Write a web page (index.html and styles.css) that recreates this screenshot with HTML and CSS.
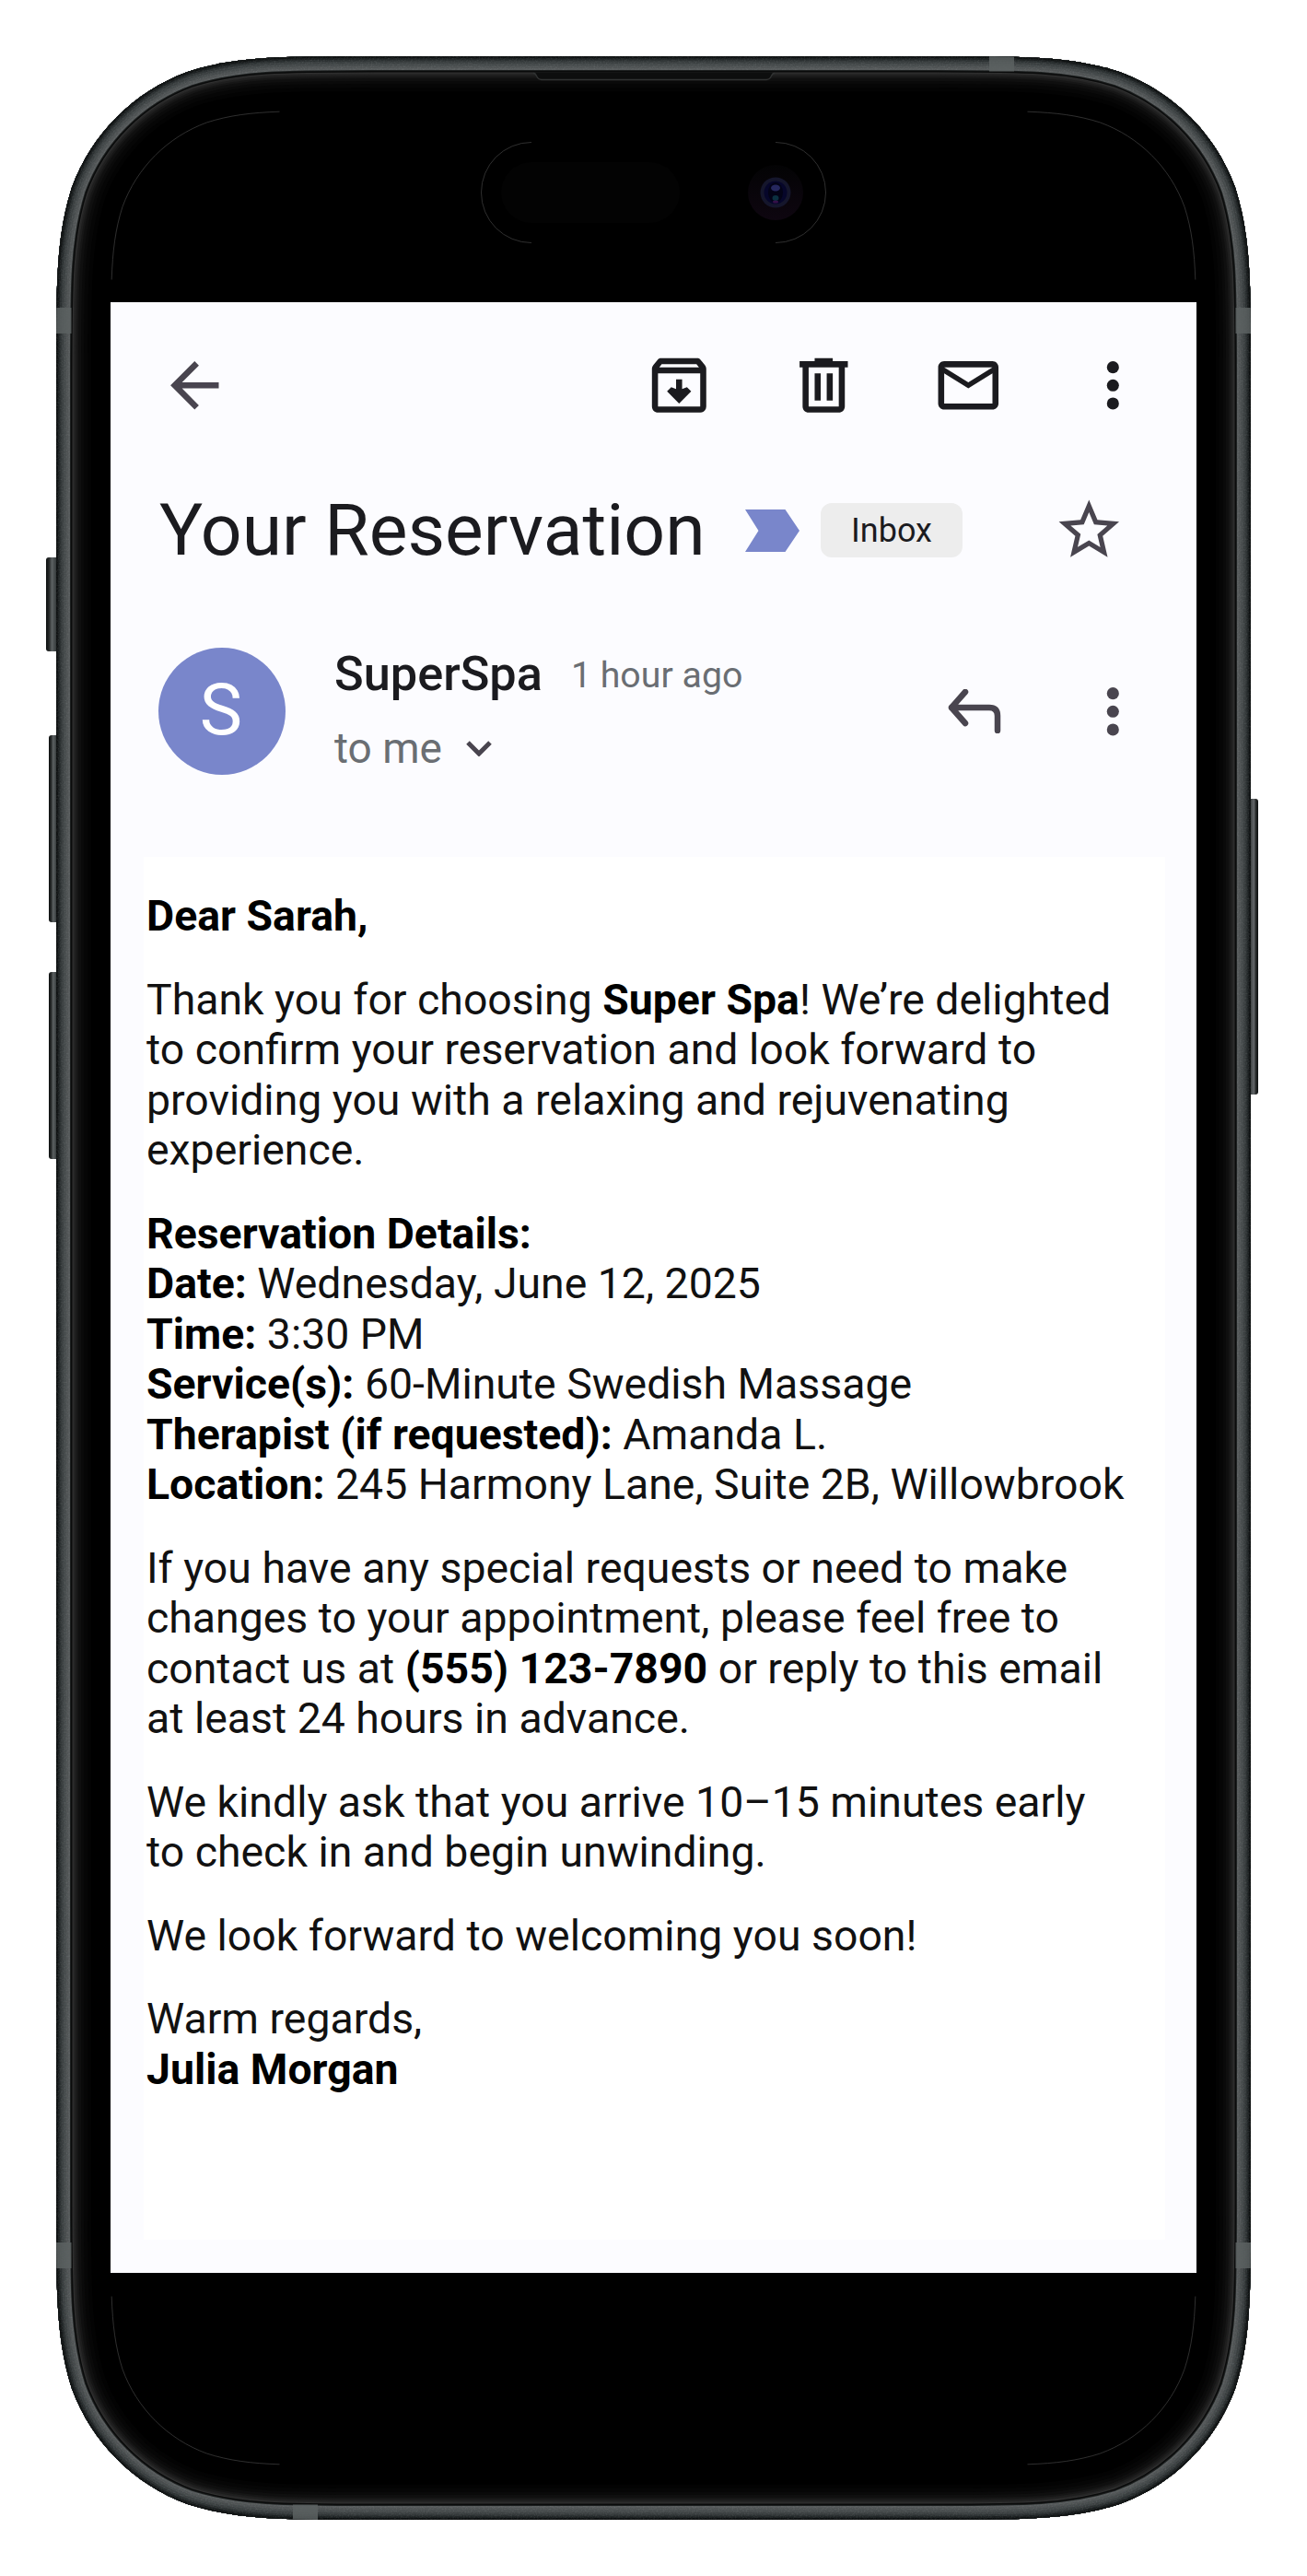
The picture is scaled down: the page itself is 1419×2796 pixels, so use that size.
FILE: index.html
```html
<!DOCTYPE html>
<html lang="en">
<head>
<meta charset="utf-8">
<title>Your Reservation</title>
<link rel="stylesheet" href="styles.css">
</head>
<body>
<main class="device">
  <svg class="frame" viewBox="0 0 1419 2796" aria-hidden="true">
    <defs>
      <path id="shell" d="M406.5 61H1012.5C1112 61 1161.7 61 1215.3 77.9C1273.7 99.2 1319.8 145.3 1341.1 203.7C1358 257.3 1358 307 1358 406.5V2389.5C1358 2489 1358 2538.7 1341.1 2592.3C1319.8 2650.7 1273.7 2696.8 1215.3 2718.1C1161.7 2735 1112 2735 1012.5 2735H406.5C307 2735 257.3 2735 203.7 2718.1C145.3 2696.8 99.2 2650.7 77.9 2592.3C61 2538.7 61 2489 61 2389.5V406.5C61 307 61 257.3 77.9 203.7C99.2 145.3 145.3 99.2 203.7 77.9C257.3 61 307 61 406.5 61Z"/>
      <clipPath id="shell-clip"><use href="#shell"/></clipPath>
      <path id="corner" pathLength="100" d="M0 252.2C0 179.6 0 143.3 12.4 104.2C27.9 61.5 61.5 27.9 104.2 12.4C143.3 0 179.6 0 252.2 0"/>
      <linearGradient id="key-left" x1="0" x2="1" y1="0" y2="0">
        <stop offset="0" stop-color="#0c0f0f"/><stop offset=".2" stop-color="#252828"/><stop offset=".4" stop-color="#5c6162"/><stop offset=".65" stop-color="#3b4041"/><stop offset="1" stop-color="#1b1f1f"/>
      </linearGradient>
      <linearGradient id="key-right" x1="1" x2="0" y1="0" y2="0">
        <stop offset="0" stop-color="#0c0f0f"/><stop offset=".2" stop-color="#252828"/><stop offset=".4" stop-color="#64686a"/><stop offset=".65" stop-color="#424647"/><stop offset="1" stop-color="#1b1f1f"/>
      </linearGradient>
      <linearGradient id="lens" x1="0" x2="0" y1="0" y2="1">
        <stop offset="0" stop-color="#030304"/><stop offset="1" stop-color="#0e0610"/>
      </linearGradient>
      <filter id="grain" x="0" y="0" width="100%" height="100%">
        <feTurbulence type="fractalNoise" baseFrequency=".6" numOctaves="2" result="n"/>
        <feColorMatrix in="n" type="matrix" values="0 0 0 0 .75  0 0 0 0 .78  0 0 0 0 .78  .9 0 0 0 -.38"/>
        <feComposite in2="SourceGraphic" operator="in"/>
      </filter>
    </defs>

    <rect x="50" y="605" width="16" height="102" rx="3" fill="url(#key-left)"/>
    <rect x="53" y="798" width="12" height="203" rx="3" fill="url(#key-left)"/>
    <rect x="53" y="1055" width="12" height="203" rx="3" fill="url(#key-left)"/>
    <rect x="1354" y="867" width="12" height="321" rx="3" fill="url(#key-right)"/>

    <use href="#shell" fill="#000"/>
    <g clip-path="url(#shell-clip)" fill="none">
      <use href="#shell" stroke="#030303" stroke-width="76"/>
      <use href="#shell" stroke="#060606" stroke-width="68"/>
      <use href="#shell" stroke="#0a0a0a" stroke-width="60"/>
      <use href="#shell" stroke="#0f0f0f" stroke-width="54"/>
      <use href="#shell" stroke="#161616" stroke-width="48"/>
      <use href="#shell" stroke="#1e1e1e" stroke-width="44"/>
      <use href="#shell" stroke="#262626" stroke-width="40"/>
      <use href="#shell" stroke="#303030" stroke-width="37"/>
      <use href="#shell" stroke="#0a0b0b" stroke-width="35"/>
      <use href="#shell" stroke="#1d2020" stroke-width="32"/>
      <use href="#shell" stroke="#565a5b" stroke-width="30"/>
      <use href="#shell" stroke="#4f5354" stroke-width="26"/>
      <use href="#shell" stroke="#454a4b" stroke-width="21"/>
      <use href="#shell" stroke="#3a3f40" stroke-width="16"/>
      <use href="#shell" stroke="#2b3031" stroke-width="11"/>
      <use href="#shell" stroke="#1b1f20" stroke-width="7"/>
      <use href="#shell" stroke="#0f1212" stroke-width="3.5"/>
      <use class="grain" href="#shell" stroke="#fff" stroke-width="30" filter="url(#grain)"/>
      <g class="antenna">
        <rect x="61" y="334" width="16.5" height="28"/>
        <rect x="1341.500" y="334" width="16.5" height="28"/>
        <rect x="61" y="2434" width="16.5" height="28"/>
        <rect x="1341.500" y="2434" width="16.5" height="28"/>
        <rect x="1074" y="61" width="27" height="16.5"/>
        <rect x="318" y="2718.500" width="27" height="16.5"/>
      </g>
    </g>
    <path d="M579 78.500C584 78.500 581 86.500 588 86.500H832C839 86.500 836 78.500 841 78.500Z" fill="#0d0e0e"/>
    <path d="M579 79.500C584 79.500 581 86.500 588 86.500H832C839 86.500 836 79.500 841 79.500" fill="none" stroke="#303232" stroke-width="1.300"/>

    <g class="hairline">
      <use href="#corner" transform="translate(120.500 120.500)"/>
      <use href="#corner" transform="translate(1298.500 120.500) scale(-1 1)"/>
      <use href="#corner" transform="translate(120.500 2675.500) scale(1 -1)"/>
      <use href="#corner" transform="translate(1298.500 2675.500) scale(-1 -1)"/>
      <path d="M577 154.500a54.500 54.500 0 0 0 0 109"/>
      <path d="M842 154.500a54.500 54.500 0 0 1 0 109"/>
    </g>
    <rect x="544" y="176" width="194" height="66" rx="33" fill="#030303"/>
    <circle cx="842" cy="209" r="30" fill="url(#lens)"/>
    <circle cx="842" cy="209" r="16.500" fill="#15162c"/>
    <circle cx="842" cy="209" r="12.500" fill="#06062a"/>
    <ellipse cx="842" cy="209" rx="8" ry="11" fill="#030316"/>
    <ellipse cx="842" cy="204" rx="5" ry="3.500" fill="#25275e"/>
    <ellipse cx="842" cy="215" rx="3.500" ry="3" fill="#0b3040"/>
    <ellipse cx="842" cy="219" rx="3" ry="1.500" fill="#351048"/>
  </svg>

  <section class="screen">
    <nav class="toolbar">
      <svg class="icon muted" viewBox="0 0 24 24"><path d="M20 11H7.830l5.590-5.590L12 4l-8 8 8 8 1.410-1.410L7.830 13H20v-2z"/></svg>
      <div class="actions">
        <svg class="icon" viewBox="0 0 24 24"><path fill-rule="evenodd" d="M20.540 5.230l-1.390-1.680C18.880 3.210 18.470 3 18 3H6c-.47 0-.88.21-1.160.55L3.460 5.230C3.170 5.570 3 6.020 3 6.500V19c0 1.100.9 2 2 2h14c1.100 0 2-.9 2-2V6.500c0-.48-.17-.93-.46-1.270zM6.240 5h11.520l.83 1H5.420l.82-1zM5 19V8h14v11H5zM13 10h-2v3.200L9.400 12.600 8 14l4 4 4-4-1.400-1.400L13 13.200z"/></svg>
        <svg class="icon" viewBox="0 0 24 24"><path fill-rule="evenodd" d="M15 4V3H9v1H4v2h1v13c0 1.100.9 2 2 2h10c1.100 0 2-.9 2-2V6h1V4h-5zm2 15H7V6h10v13zM9 8h2v9H9zM13 8h2v9h-2z"/></svg>
        <svg class="icon" viewBox="0 0 24 24"><path fill-rule="evenodd" d="M20 4H4c-1.100 0-2 .9-2 2v12c0 1.100.9 2 2 2h16c1.100 0 2-.9 2-2V6c0-1.100-.9-2-2-2zm0 14H4V8l8 5 8-5v10zm-8-7L4 6h16l-8 5z"/></svg>
        <svg class="icon" viewBox="0 0 24 24"><circle cx="12" cy="6" r="2"/><circle cx="12" cy="12" r="2"/><circle cx="12" cy="18" r="2"/></svg>
      </div>
    </nav>

    <header class="subject">
      <h1 class="subject-text">Your Reservation</h1>
      <svg class="marker" viewBox="0 0 59 46"><path d="M0 0H43.500L59 23L43.500 46H0L14.500 23Z"/></svg>
      <span class="chip">Inbox</span>
      <svg class="icon muted star" viewBox="0 0 24 24"><path d="M22 9.240l-7.190-.62L12 2 9.190 8.630 2 9.240l5.460 4.730L5.820 21 12 17.270 18.180 21l-1.630-7.030L22 9.240zM12 15.400l-3.760 2.270 1-4.280-3.320-2.880 4.380-.38L12 6.100l1.710 4.040 4.380.38-3.320 2.880 1 4.280L12 15.400z"/></svg>
    </header>

    <div class="sender">
      <div class="avatar">S</div>
      <div class="who">
        <div class="from"><span class="name">SuperSpa</span><span class="time">1 hour ago</span></div>
        <div class="to"><span>to me</span><svg class="chevron" viewBox="0 0 28 17"><path d="M2 2L14 14L26 2"/></svg></div>
      </div>
      <svg class="reply" viewBox="0 0 58 48"><path d="M19 3L4 20L19 37M4 20H45Q54 20 54 29V45"/></svg>
      <svg class="icon muted" viewBox="0 0 24 24"><circle cx="12" cy="6" r="2"/><circle cx="12" cy="12" r="2"/><circle cx="12" cy="18" r="2"/></svg>
    </div>

    <article class="message">
      <p><b>Dear Sarah,</b></p>
      <p>Thank you for choosing <b>Super Spa</b>! We’re delighted<br>to confirm your reservation and look forward to<br>providing you with a relaxing and rejuvenating<br>experience.</p>
      <p><b>Reservation Details:</b><br><b>Date:</b> Wednesday, June 12, 2025<br><b>Time:</b> 3:30 PM<br><b>Service(s):</b> 60-Minute Swedish Massage<br><b>Therapist (if requested):</b> Amanda L.<br><b>Location:</b> 245 Harmony Lane, Suite 2B, Willowbrook</p>
      <p>If you have any special requests or need to make<br>changes to your appointment, please feel free to<br>contact us at <b>(555) 123-7890</b> or reply to this email<br>at least 24 hours in advance.</p>
      <p>We kindly ask that you arrive 10–15 minutes early<br>to check in and begin unwinding.</p>
      <p>We look forward to welcoming you soon!</p>
      <p>Warm regards,<br><b>Julia Morgan</b></p>
    </article>
  </section>
</main>
</body>
</html>
```
FILE: styles.css
```css
* { box-sizing: border-box; }

body {
  margin: 0;
  background: #fff;
  font-family: Roboto, "Liberation Sans", sans-serif;
  color: #1b1b1f;
}

.device {
  display: grid;
  width: 1419px;
  height: 2796px;
}

.frame, .screen { grid-area: 1 / 1; }
.frame { width: 1419px; height: 2796px; }
.grain { opacity: .25; }
.antenna { fill: #5c6162; opacity: .85; }
.hairline { fill: none; stroke: #444; stroke-width: .7; }
.hairline use { stroke-dasharray: 68 100; stroke-dashoffset: -16; }

.screen {
  display: flex;
  flex-direction: column;
  width: 1179px;
  height: 2139px;
  margin: 328px 0 0 120px;
  padding: 0 34px 36px 36px;
  background: #fcfcff;
}

.icon { flex: none; width: 78.6px; height: 78.6px; fill: #1b1b1f; }
.icon.muted { fill: #49454f; }

.toolbar {
  display: flex;
  justify-content: space-between;
  align-items: center;
  height: 180px;
  padding: 0 17px 0 16px;
}
.actions { display: flex; gap: 78.7px; }

.subject {
  display: flex;
  align-items: center;
  height: 136px;
  padding: 0 43px 1px 17px;
}
.subject-text {
  width: 636px;
  margin: 0;
  padding-bottom: 2px;
  font-size: 78.7px;
  font-weight: 400;
  line-height: 92px;
  white-space: nowrap;
}
.marker { flex: none; width: 59px; height: 46px; fill: #7986cb; }
.chip {
  width: 154px;
  height: 59px;
  margin-left: 23px;
  border-radius: 12px;
  background: #ededed;
  font-size: 36px;
  line-height: 60px;
  text-align: center;
}
.star { margin-left: auto; }

.sender {
  display: flex;
  align-items: center;
  height: 286px;
  padding: 0 17px 30px 16px;
}
.avatar {
  width: 138px;
  height: 138px;
  padding-right: 2px;
  border-radius: 50%;
  background: #7986cb;
  color: #fff;
  font-size: 78px;
  line-height: 136px;
  text-align: center;
}
.who { margin-left: 53px; }
.from { display: flex; align-items: center; height: 80px; padding-bottom: 2px; white-space: nowrap; }
.name { font-size: 52.3px; font-weight: 500; }
.time { margin-left: 31px; padding-top: 3px; font-size: 39.3px; color: #6a6e73; }
.to { display: flex; align-items: center; gap: 26px; height: 80px; font-size: 46px; line-height: 80px; color: #6a6e73; }
.chevron { width: 28px; height: 17px; fill: none; stroke: #49454f; stroke-width: 5; }
.reply { width: 58px; height: 48px; margin: 0 82px 0 auto; fill: none; stroke: #49454f; stroke-width: 6.5; stroke-linecap: round; stroke-linejoin: round; }

.message {
  flex: 1;
  padding: 37px 0 0 3px;
  background: #fff;
  color: #111;
  font-size: 46.4px;
  line-height: 54.5px;
  white-space: nowrap;
}
.message p { margin: 0 0 36px; }
.message b { font-weight: 700; color: #000; }
```
